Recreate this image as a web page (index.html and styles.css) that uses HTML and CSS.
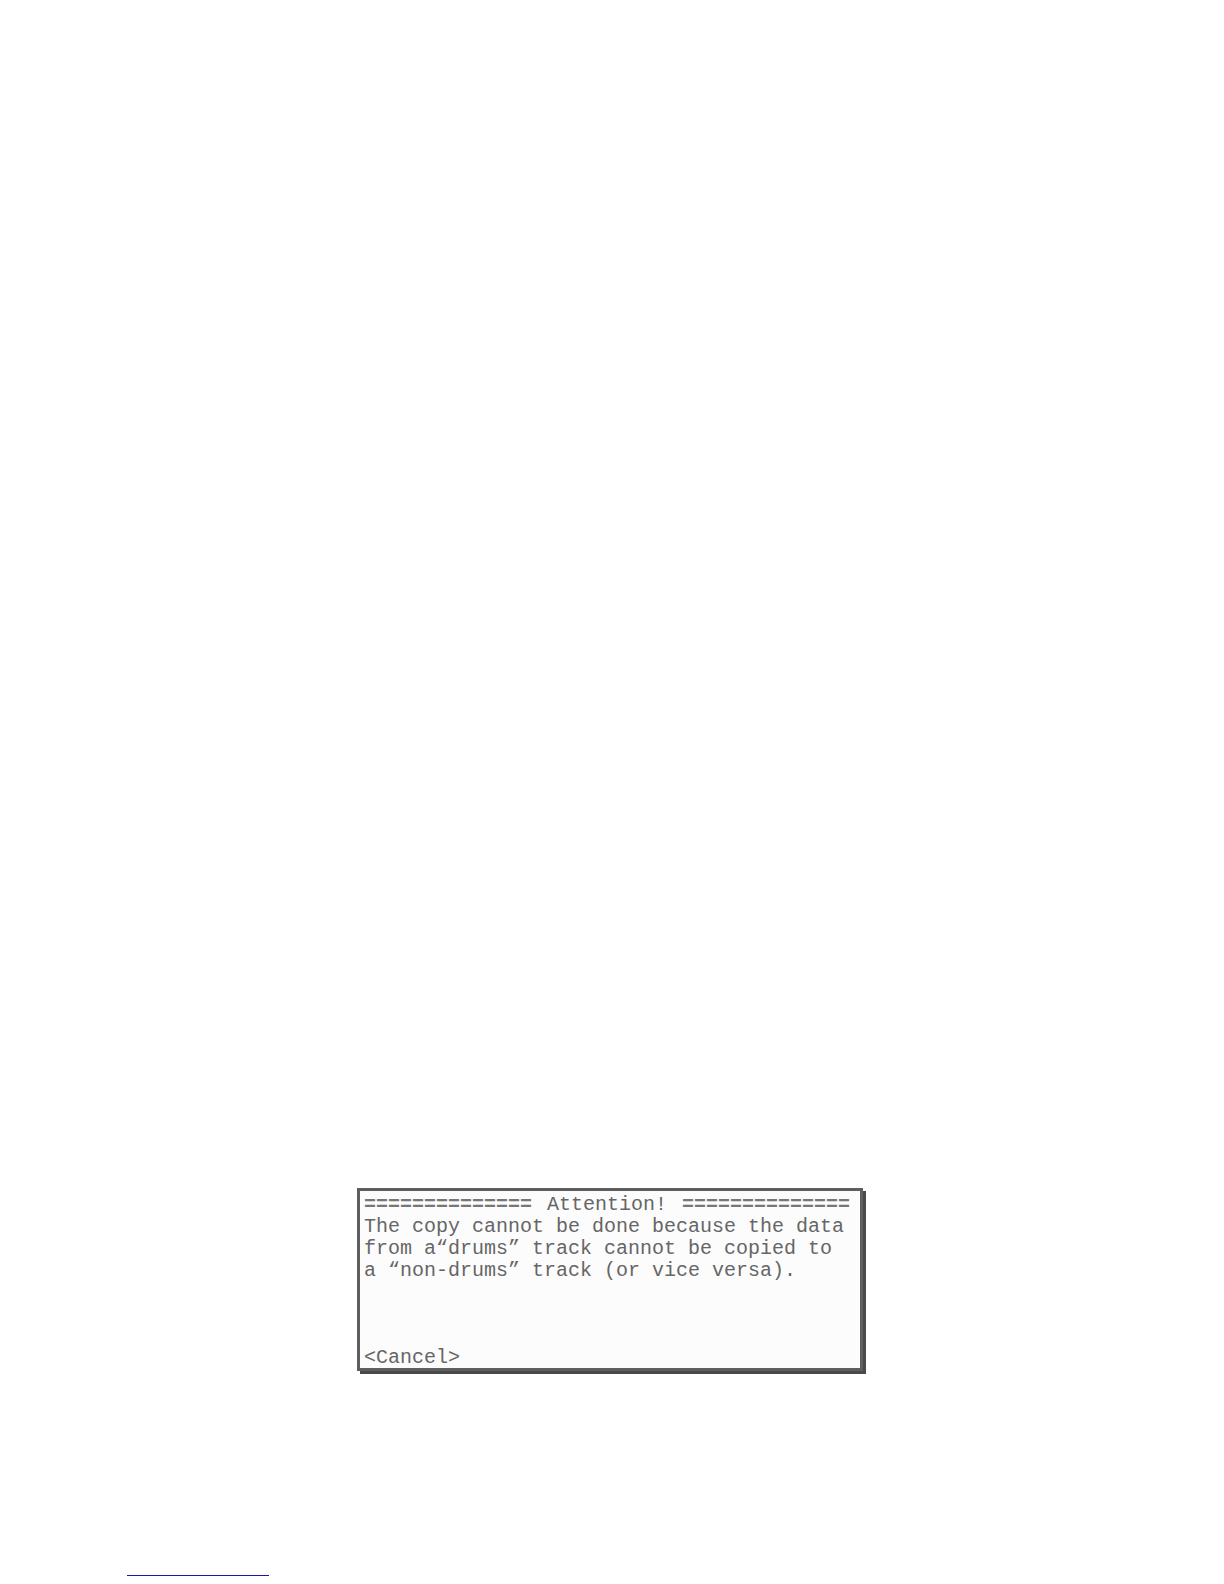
FILE: index.html
```html
<!DOCTYPE html>
<html lang="en">

<head>
    <meta charset="UTF-8">
    <meta name="viewport" content="width=device-width, initial-scale=1.0">
    <title>Attention!</title>
    <link rel="stylesheet" href="styles.css">
</head>

<body>
    <main class="page">
        <section class="dialog" role="alertdialog" aria-labelledby="dialog-title" aria-describedby="dialog-message">
            <div class="dialog-header">
                <span class="rule" aria-hidden="true">==============</span>
                <h1 id="dialog-title">Attention!</h1>
                <span class="rule" aria-hidden="true">==============</span>
            </div>
            <p id="dialog-message" class="message">
                The copy cannot be done because the data<br>
                from a“drums” track cannot be copied to<br>
                a “non-drums” track (or vice versa).
            </p>
            <button type="button" class="cancel-btn">&lt;Cancel&gt;</button>
        </section>
    </main>
    <footer>
        <hr class="footer-line">
    </footer>
</body>

</html>
```

FILE: styles.css
```css
* {
    box-sizing: border-box;
}

body {
    margin: 0;
    min-height: 100vh;
    display: flex;
    flex-direction: column;
    background-color: #fff;
    color: #666;
    font-family: "Liberation Mono", "Courier New", monospace;
    font-size: 20px;
    line-height: 22px;
}

.page {
    flex: 1;
    display: flex;
    justify-content: center;
    align-items: flex-end;
    padding: 0 4px 204px 0;
}

.dialog {
    width: 100%;
    max-width: 506px;
    padding: 3px 10px 0 4px;
    border: 3px solid #5e5e5e;
    background-color: #fcfcfc;
    box-shadow: 3px 3px 0 #4a4a4a;
}

.dialog-header {
    display: flex;
    justify-content: space-between;
}

.dialog-header h1 {
    margin: 0;
    font-size: 20px;
    font-weight: normal;
}

.rule {
    color: #777;
    font-weight: bold;
}

.message {
    margin: 0 0 66px;
}

.cancel-btn {
    display: block;
    padding: 0;
    border: none;
    background: none;
    color: inherit;
    font: inherit;
    line-height: 20px;
    cursor: pointer;
}

footer {
    padding: 0 127px 8px;
}

.footer-line {
    width: 142px;
    margin: 0;
    border: none;
    border-top: 1px solid #1a1aa6;
}
```
